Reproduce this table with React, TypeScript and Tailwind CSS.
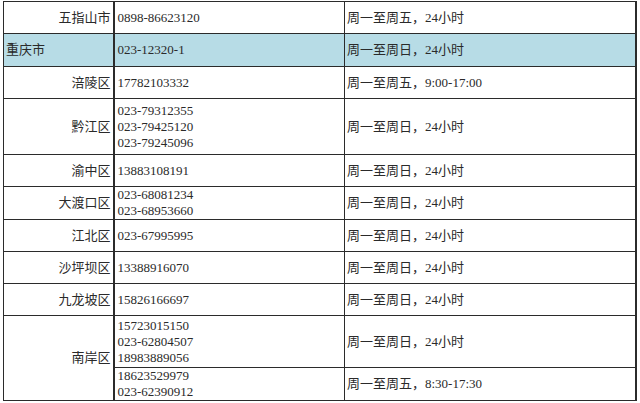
import { FC } from "react";

type Row = {
  area: string;
  phones: string[];
  hours: string;
  h: string;
  highlight?: boolean;
  left?: boolean;
};

const rows: Row[] = [
  { area: "五指山市", phones: ["0898-86623120"], hours: "周一至周五，24小时", h: "h-[32px]" },
  { area: "重庆市", phones: ["023-12320-1"], hours: "周一至周日，24小时", h: "h-[33px]", highlight: true, left: true },
  { area: "涪陵区", phones: ["17782103332"], hours: "周一至周五，9:00-17:00", h: "h-[32px]" },
  { area: "黔江区", phones: ["023-79312355", "023-79425120", "023-79245096"], hours: "周一至周日，24小时", h: "h-[56px]" },
  { area: "渝中区", phones: ["13883108191"], hours: "周一至周日，24小时", h: "h-[32px]" },
  { area: "大渡口区", phones: ["023-68081234", "023-68953660"], hours: "周一至周日，24小时", h: "h-[32px]" },
  { area: "江北区", phones: ["023-67995995"], hours: "周一至周日，24小时", h: "h-[32px]" },
  { area: "沙坪坝区", phones: ["13388916070"], hours: "周一至周日，24小时", h: "h-[32px]" },
  { area: "九龙坡区", phones: ["15826166697"], hours: "周一至周日，24小时", h: "h-[32px]" },
];

const cell = "border border-[#2b2b2b] align-middle leading-[16px]";

const App: FC = () => {
  return (
    <div className="h-[403px] w-[640px] overflow-hidden bg-white pl-[3px] pt-[1px] font-['Liberation_Serif','Noto_Sans_CJK_SC',serif] text-[13px] text-[#2a2a2a]">
      <table className="w-[632px] table-fixed border-collapse">
        <colgroup>
          <col className="w-[110px]" />
          <col className="w-[231px]" />
          <col className="w-[291px]" />
        </colgroup>
        <tbody>
          {rows.map((r) => (
            <tr key={r.area} className={r.highlight ? "bg-[#b7dce6]" : ""}>
              <td className={`${cell} ${r.h} ${r.left ? "pl-[2px] text-left" : "pr-[2px] text-right"}`}>
                {r.area}
              </td>
              <td className={`${cell} border-l-2 pl-[3px]`}>
                {r.phones.map((p) => (
                  <div key={p}>{p}</div>
                ))}
              </td>
              <td className={`${cell} border-r-2 pl-[2px]`}>{r.hours}</td>
            </tr>
          ))}
          <tr>
            <td rowSpan={2} className={`${cell} pr-[2px] text-right`}>
              南岸区
            </td>
            <td className={`${cell} h-[52px] border-l-2 pl-[3px]`}>
              <div>15723015150</div>
              <div>023-62804507</div>
              <div>18983889056</div>
            </td>
            <td className={`${cell} border-r-2 pl-[2px]`}>周一至周日，24小时</td>
          </tr>
          <tr>
            <td className={`${cell} h-[32px] border-l-2 pl-[3px]`}>
              <div>18623529979</div>
              <div>023-62390912</div>
            </td>
            <td className={`${cell} border-r-2 pl-[2px]`}>周一至周五，8:30-17:30</td>
          </tr>
        </tbody>
      </table>
    </div>
  );
};

export default App;
